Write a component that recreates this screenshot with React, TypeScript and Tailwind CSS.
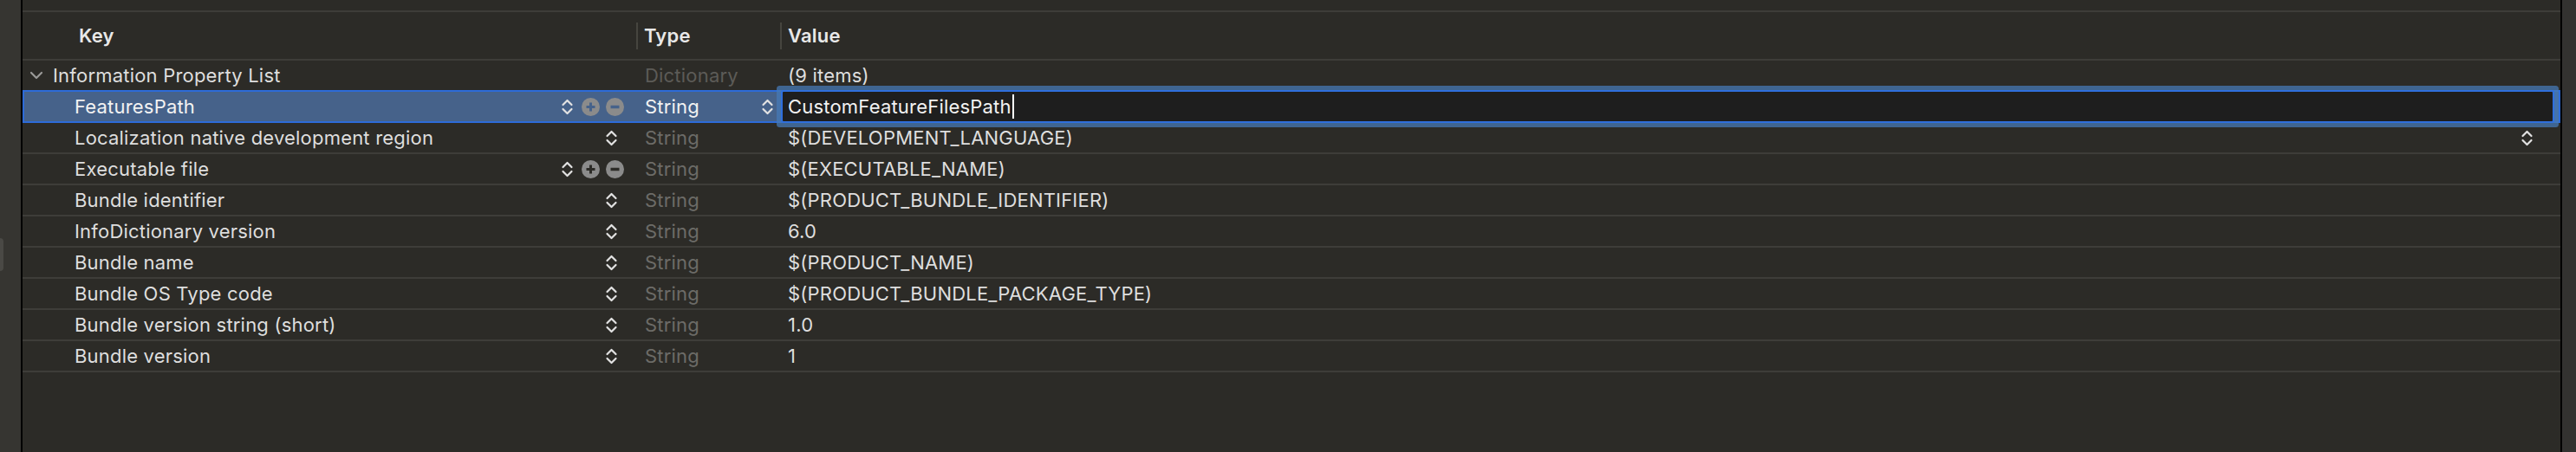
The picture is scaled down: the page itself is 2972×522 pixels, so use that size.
import React from "react";

const Stepper = ({ color = "#e2e2e2" }: { color?: string }) => (
  <svg width="15" height="21" viewBox="0 0 15 21" fill="none">
    <path d="M2.5 8 L7.5 3 L12.5 8" stroke={color} strokeWidth="2.2" strokeLinecap="round" strokeLinejoin="round" />
    <path d="M2.5 13 L7.5 18 L12.5 13" stroke={color} strokeWidth="2.2" strokeLinecap="round" strokeLinejoin="round" />
  </svg>
);

const PlusCircle = ({ bg }: { bg: string }) => (
  <svg width="21" height="21" viewBox="0 0 21 21">
    <circle cx="10.5" cy="10.5" r="10.5" fill="#8b8b8b" />
    <path d="M5.5 10.5 H15.5 M10.5 5.5 V15.5" stroke={bg} strokeWidth="3" />
  </svg>
);

const MinusCircle = ({ bg }: { bg: string }) => (
  <svg width="21" height="21" viewBox="0 0 21 21">
    <circle cx="10.5" cy="10.5" r="10.5" fill="#8b8b8b" />
    <path d="M5.5 10.5 H15.5" stroke={bg} strokeWidth="3.5" />
  </svg>
);

type Row = {
  key: string;
  value: string;
  plusMinus?: boolean;
  valueStepper?: boolean;
};

const rows: Row[] = [
  { key: "Localization native development region", value: "$(DEVELOPMENT_LANGUAGE)", valueStepper: true },
  { key: "Executable file", value: "$(EXECUTABLE_NAME)", plusMinus: true },
  { key: "Bundle identifier", value: "$(PRODUCT_BUNDLE_IDENTIFIER)" },
  { key: "InfoDictionary version", value: "6.0" },
  { key: "Bundle name", value: "$(PRODUCT_NAME)" },
  { key: "Bundle OS Type code", value: "$(PRODUCT_BUNDLE_PACKAGE_TYPE)" },
  { key: "Bundle version string (short)", value: "1.0" },
  { key: "Bundle version", value: "1" },
];

export default function App() {
  const bg = "#2c2b27";
  return (
    <div
      className="w-[2972px] h-[522px] flex bg-[#2c2b27] text-[22px] leading-none tracking-[0.2px] overflow-hidden"
      style={{ fontFamily: "Inter, 'Noto Sans', sans-serif" }}
    >
      {/* left strip */}
      <div className="w-[24px] h-full bg-[#363531] flex flex-col">
        <div className="mt-[275px] w-[4px] h-[38px] rounded-r-[4px] bg-[#4a4945]" />
      </div>
      <div className="w-[2px] h-full bg-black" />

      {/* main */}
      <div className="flex-1 flex flex-col min-w-0">
        <div className="h-[12px]" />
        <div className="h-[2px] bg-[#3e3d39]" />
        {/* header */}
        <div className="h-[54px] flex items-center text-[#e8e8e8] font-semibold">
          <div className="w-[708px] pl-[65px]">Key</div>
          <div className="w-[2px] h-[31px] bg-[#46453f]" />
          <div className="w-[164px] pl-[7px]">Type</div>
          <div className="w-[2px] h-[31px] bg-[#46453f]" />
          <div className="flex-1 pl-[7px]">Value</div>
        </div>
        <div className="h-[2px] bg-[#3e3d39]" />

        {/* root row */}
        <div className="h-[36px] border-b-2 border-[#3e3d39] flex items-center">
          <div className="w-[709px] flex items-center">
            <svg className="ml-[8px]" width="16" height="10" viewBox="0 0 16 10" fill="none">
              <path d="M2 2 L8 8 L14 2" stroke="#9a9a98" strokeWidth="2.2" strokeLinecap="round" strokeLinejoin="round" />
            </svg>
            <span className="ml-[11px] text-[#dedede]">Information Property List</span>
          </div>
          <div className="w-[166px] pl-[9px] text-[#5c5b57]">Dictionary</div>
          <div className="flex-1 pl-[8px] text-[#dedede]">(9 items)</div>
        </div>

        {/* selected row */}
        <div className="-mt-[2px] h-[38px] bg-[#46628a] shadow-[inset_0_0_0_2px_#2d6bd9] flex items-center">
          <div className="w-[709px] flex items-center pr-[15px]">
            <span className="pl-[60px] text-[#f2f2f2] flex-1">FeaturesPath</span>
            <Stepper />
            <div className="ml-[9px]">
              <PlusCircle bg="#46628a" />
            </div>
            <div className="ml-[7px]">
              <MinusCircle bg="#46628a" />
            </div>
          </div>
          <div className="w-[166px] pl-[9px] pr-[8px] flex items-center text-[#f2f2f2]">
            <span className="flex-1">String</span>
            <Stepper />
          </div>
          <div className="flex-1 flex items-center pl-[2px] pr-[9px]">
            <div className="flex-1 h-[34px] bg-[#1e1e1e] rounded-[1px] shadow-[0_0_0_2px_#2f6fdc,0_0_0_7px_rgba(70,122,182,0.75)] flex items-center pl-[6px] text-[#f2f2f2]">
              <span>CustomFeatureFilesPath</span>
              <span className="inline-block w-[2px] h-[28px] bg-white ml-[1px]" />
            </div>
          </div>
        </div>

        {rows.map((r) => (
          <div key={r.key} className="h-[36px] border-b-2 border-[#3e3d39] flex items-center">
            <div className={`w-[709px] flex items-center ${r.plusMinus ? "pr-[15px]" : "pr-[22px]"}`}>
              <span className="pl-[60px] text-[#dedede] flex-1 whitespace-nowrap">{r.key}</span>
              <Stepper />
              {r.plusMinus && (
                <>
                  <div className="ml-[9px]">
                    <PlusCircle bg={bg} />
                  </div>
                  <div className="ml-[7px]">
                    <MinusCircle bg={bg} />
                  </div>
                </>
              )}
            </div>
            <div className="w-[166px] pl-[9px] text-[#6c6b67]">String</div>
            <div className="flex-1 flex items-center pl-[8px] pr-[31px] text-[#dedede]">
              <span className="flex-1 whitespace-nowrap">{r.value}</span>
              {r.valueStepper && <Stepper />}
            </div>
          </div>
        ))}
        <div className="flex-1" />
      </div>

      <div className="w-[2px] h-full bg-black" />
      <div className="w-[16px] h-full bg-[#333230]" />
    </div>
  );
}
